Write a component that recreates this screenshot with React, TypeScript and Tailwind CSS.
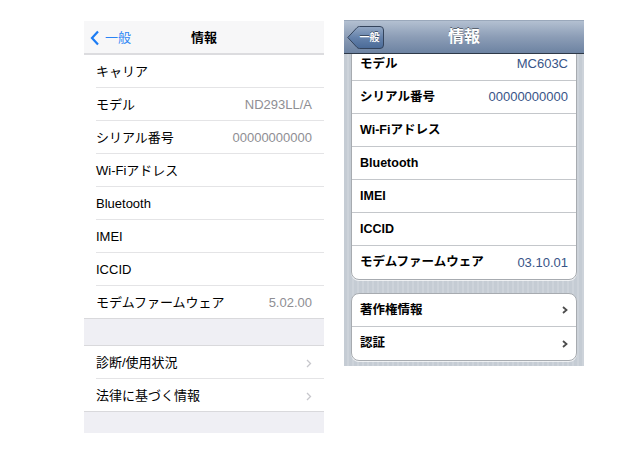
import React from "react";

const font = "font-['Liberation_Sans','Noto_Sans_CJK_JP',sans-serif]";

type Row = { label: string; value?: string; chevron?: boolean };

const flatRows: Row[] = [
  { label: "キャリア" },
  { label: "モデル", value: "ND293LL/A" },
  { label: "シリアル番号", value: "00000000000" },
  { label: "Wi-Fiアドレス" },
  { label: "Bluetooth" },
  { label: "IMEI" },
  { label: "ICCID" },
  { label: "モデムファームウェア", value: "5.02.00" },
];

const flatLinks: Row[] = [
  { label: "診断/使用状況", chevron: true },
  { label: "法律に基づく情報", chevron: true },
];

const classicRows: Row[] = [
  { label: "モデル", value: "MC603C" },
  { label: "シリアル番号", value: "00000000000" },
  { label: "Wi-Fiアドレス" },
  { label: "Bluetooth" },
  { label: "IMEI" },
  { label: "ICCID" },
  { label: "モデムファームウェア", value: "03.10.01" },
];

const classicLinks: Row[] = [
  { label: "著作権情報", chevron: true },
  { label: "認証", chevron: true },
];

function FlatRow({ row, last }: { row: Row; last: boolean }) {
  return (
    <div className={`h-[33px] bg-white pl-[12px] ${last ? "border-b border-[#d9d9dc]" : ""}`}>
      <div
        className={`h-full flex items-center justify-between pr-[12px] pt-[2px] ${
          last ? "" : "border-b border-[#e4e4e6]"
        }`}
      >
        <span className="text-[13px] text-black">{row.label}</span>
        {row.value && <span className="text-[13px] text-[#8e8e93]">{row.value}</span>}
        {row.chevron && (
          <svg width="6" height="9" viewBox="0 0 6 9">
            <path d="M1 1l3.5 3.5L1 8" fill="none" stroke="#c7c7cc" strokeWidth="1.3" />
          </svg>
        )}
      </div>
    </div>
  );
}

function FlatPhone() {
  return (
    <div className="w-[240px] h-[412px] mt-[1px] bg-[#efeff4] flex flex-col">
      <div className="h-[34px] bg-[#f7f7f8] border-b-2 border-[#dcdcdf] grid grid-cols-[1fr_auto_1fr] items-center">
        <div className="flex items-center pl-[6px] gap-[5px] pt-[2px]">
          <svg width="10" height="16" viewBox="0 0 10 16">
            <path d="M8 1.5L2 8l6 6.5" fill="none" stroke="#1c7cf4" strokeWidth="2.2" />
          </svg>
          <span className="text-[13px] text-[#2a84f5]">一般</span>
        </div>
        <span className="text-[13px] font-bold text-black pt-[2px]">情報</span>
        <div />
      </div>
      <div>
        {flatRows.map((r, i) => (
          <FlatRow key={r.label} row={r} last={i === flatRows.length - 1} />
        ))}
      </div>
      <div className="h-[26px]" />
      <div className="border-t border-[#d9d9dc]">
        {flatLinks.map((r, i) => (
          <FlatRow key={r.label} row={r} last={i === flatLinks.length - 1} />
        ))}
      </div>
    </div>
  );
}

function ClassicGroup({ rows }: { rows: Row[] }) {
  return (
    <div className="mx-[7px] rounded-[8px] border border-[#a7abb0] bg-white overflow-hidden shadow-[0_1px_0_rgba(255,255,255,0.7)]">
      {rows.map((r, i) => (
        <div
          key={r.label}
          className={`h-[33px] flex items-center justify-between px-[8px] ${
            i === rows.length - 1 ? "" : "border-b border-[#c4c7cb]"
          }`}
        >
          <span className="text-[12.5px] font-bold text-black">{r.label}</span>
          {r.value && <span className="text-[13px] text-[#385487]">{r.value}</span>}
          {r.chevron && (
            <svg width="6" height="8" viewBox="0 0 6 8">
              <path d="M1 1l3.5 3L1 7" fill="none" stroke="#4d4d4d" strokeWidth="1.8" />
            </svg>
          )}
        </div>
      ))}
    </div>
  );
}

function ClassicPhone() {
  return (
    <div className="w-[240px] h-[346px] flex flex-col overflow-hidden">
      <div className="h-[34px] shrink-0 border-t border-[#9aa8bb] border-b border-b-[#2d3847] bg-gradient-to-b from-[#b3c0d1] via-[#8c9db6] to-[#6d83a2] grid grid-cols-[1fr_auto_1fr] items-center">
        <div className="pl-[3px]">
          <div className="relative w-[37px] h-[23px]">
            <svg width="37" height="23" viewBox="0 0 37 23">
              <defs>
                <linearGradient id="bb" x1="0" y1="0" x2="0" y2="1">
                  <stop offset="0" stopColor="#94a8c4" />
                  <stop offset="0.5" stopColor="#6582ab" />
                  <stop offset="1" stopColor="#4a6a97" />
                </linearGradient>
              </defs>
              <path
                d="M0.8 11.5L10 1.6Q11 0.5 12.5 0.5H33Q36.5 0.5 36.5 4V19Q36.5 22.5 33 22.5H12.5Q11 22.5 10 21.4Z"
                fill="url(#bb)"
                stroke="#34445c"
              />
            </svg>
            <span className="absolute inset-0 pl-[8px] flex items-center justify-center text-[10px] font-bold text-white [text-shadow:0_-1px_0_rgba(0,0,0,0.45)]">
              一般
            </span>
          </div>
        </div>
        <span className="text-[16px] font-bold text-white [text-shadow:0_-1px_0_rgba(0,0,0,0.45)]">
          情報
        </span>
        <div />
      </div>
      <div className="flex-1 overflow-hidden bg-[repeating-linear-gradient(90deg,#c5ccd4_0px,#c5ccd4_3px,#cdd3da_3px,#cdd3da_5px)]">
        <div className="-mt-[7px]">
          <ClassicGroup rows={classicRows} />
        </div>
        <div className="mt-[13px]">
          <ClassicGroup rows={classicLinks} />
        </div>
      </div>
    </div>
  );
}

export default function App() {
  return (
    <div className={`w-[644px] h-[449px] bg-white ${font}`}>
      <div className="flex items-start gap-[20px] pl-[84px] pt-[20px]">
        <FlatPhone />
        <ClassicPhone />
      </div>
    </div>
  );
}
